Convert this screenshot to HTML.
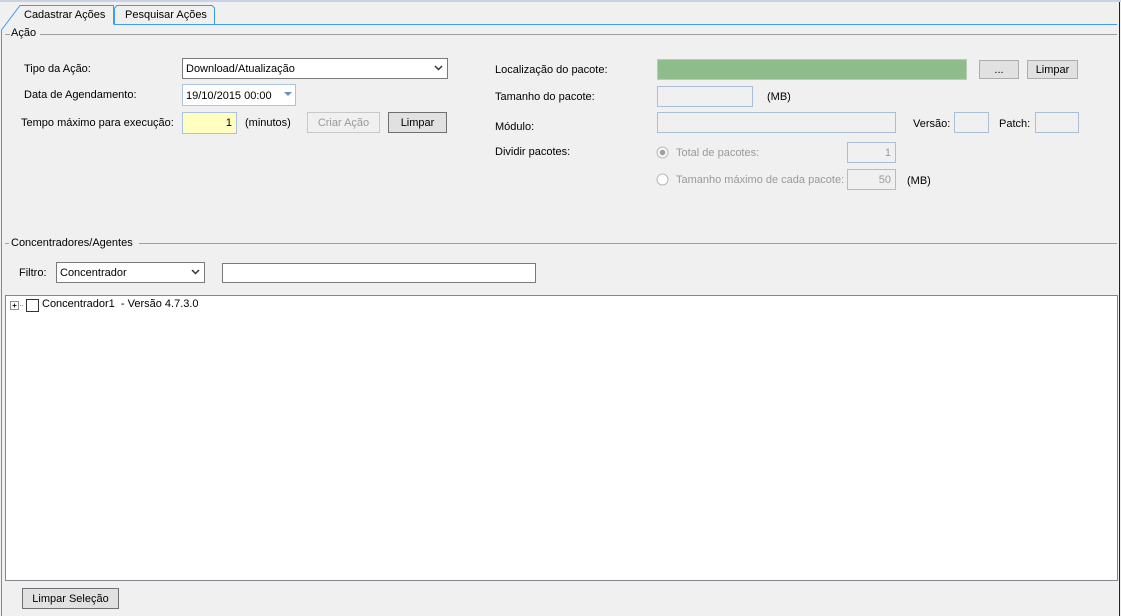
<!DOCTYPE html>
<html><head><meta charset="utf-8"><style>
*{margin:0;padding:0;box-sizing:border-box}
body{width:1121px;height:616px;background:#f0f0f0;position:relative;overflow:hidden;font-family:"Liberation Sans",sans-serif;font-size:11px;color:#000}
.a{position:absolute;white-space:nowrap}
.box{position:absolute;border:1px solid #a9bfd6;background:#f0f0f0}
.btn{position:absolute;border:1px solid #adadad;background:#e1e1e1;text-align:center;line-height:20px}
.gray{color:#9a9a9a}
.line{position:absolute;height:1px;background:#a0a0a0}
</style></head><body>
<div class="a" style="left:0;top:0;width:1121px;height:2px;background:#c8d2e2"></div>
<svg class="a" style="left:0;top:0" width="1121" height="616">
<path d="M1.5 616 V30 L20 5.5 H113.5 V24.5" fill="none" stroke="#3c9cf0" stroke-width="1"/>
<path d="M114.5 24.5 V8 L117 5.5 H212 L214.5 8 V24.5" fill="none" stroke="#3c9cf0"/>
<path d="M114 24.5 H1117" stroke="#3c9cf0"/>
<path d="M1119.5 2 V616" stroke="#222" stroke-width="1"/>
</svg>
<div class="a" style="left:24px;top:9px">Cadastrar Ações</div>
<div class="a" style="left:125px;top:9px">Pesquisar Ações</div>
<div class="line" style="left:5px;top:34px;width:5px"></div>
<div class="a" style="left:11px;top:27px">Ação</div>
<div class="line" style="left:40px;top:34px;width:1077px"></div>

<div class="a" style="left:24px;top:63px">Tipo da Ação:</div>
<div class="a" style="left:182px;top:58px;width:266px;height:21px;border:1px solid #7a7a7a;background:#fff;padding:4px 0 0 3px">Download/Atualização</div>
<svg class="a" style="left:434px;top:64px" width="10" height="8"><path d="M1 2 L4.5 5.5 L8 2" fill="none" stroke="#333" stroke-width="1.5"/></svg>
<div class="a" style="left:24px;top:89px">Data de Agendamento:</div>
<div class="a" style="left:182px;top:84px;width:114px;height:22px;border:1px solid #a8c2e0;background:#fff;padding:5px 0 0 3px">19/10/2015 00:00</div>
<svg class="a" style="left:284px;top:92px" width="9" height="5"><path d="M0 0 H8 L4 4Z" fill="#6d8cb8"/></svg>
<div class="a" style="left:21px;top:117px">Tempo máximo para execução:</div>
<div class="a" style="left:182px;top:112px;width:55px;height:22px;border:1px solid #a8c2e0;background:#ffffc0;text-align:right;padding:4px 4px 0 0">1</div>
<div class="a" style="left:245px;top:117px">(minutos)</div>
<div class="btn gray" style="left:307px;top:112px;width:73px;height:21px;background:#f0f0f0;border-color:#c8c8c8">Criar Ação</div>
<div class="btn" style="left:388px;top:112px;width:59px;height:21px;background:#e1e1e1;border-color:#707070">Limpar</div>

<div class="a" style="left:495px;top:64px">Localização do pacote:</div>
<div class="a" style="left:657px;top:59px;width:310px;height:21px;background:#8fbc8b;border:1px solid #b8cbb8"></div>
<div class="btn" style="left:979px;top:60px;width:40px;height:19px;line-height:18px">...</div>
<div class="btn" style="left:1027px;top:60px;width:51px;height:19px;line-height:18px">Limpar</div>
<div class="a" style="left:495px;top:91px">Tamanho do pacote:</div>
<div class="box" style="left:657px;top:86px;width:96px;height:21px"></div>
<div class="a" style="left:767px;top:91px">(MB)</div>
<div class="a" style="left:495px;top:121px">Módulo:</div>
<div class="box" style="left:657px;top:112px;width:239px;height:21px"></div>
<div class="a" style="left:913px;top:118px">Versão:</div>
<div class="box" style="left:954px;top:112px;width:35px;height:21px"></div>
<div class="a" style="left:999px;top:118px">Patch:</div>
<div class="box" style="left:1035px;top:112px;width:44px;height:21px"></div>
<div class="a" style="left:495px;top:146px">Dividir pacotes:</div>
<svg class="a" style="left:656px;top:146px" width="13" height="13"><circle cx="6.5" cy="6.5" r="5.5" fill="#f8f8f8" stroke="#b8b8b8"/><circle cx="6.5" cy="6.5" r="2.8" fill="#a0a0a0"/></svg>
<div class="a gray" style="left:676px;top:147px">Total de pacotes:</div>
<div class="box gray" style="left:847px;top:142px;width:49px;height:21px;text-align:right;padding:4px 4px 0 0">1</div>
<svg class="a" style="left:656px;top:173px" width="13" height="13"><circle cx="6.5" cy="6.5" r="5.5" fill="#fff" stroke="#b8b8b8"/></svg>
<div class="a gray" style="left:676px;top:174px">Tamanho máximo de cada pacote:</div>
<div class="box gray" style="left:847px;top:169px;width:49px;height:21px;text-align:right;padding:4px 4px 0 0">50</div>
<div class="a" style="left:907px;top:175px">(MB)</div>

<div class="line" style="left:5px;top:243px;width:4px"></div>
<div class="a" style="left:11px;top:237px">Concentradores/Agentes</div>
<div class="line" style="left:139px;top:243px;width:978px"></div>
<div class="a" style="left:19px;top:267px">Filtro:</div>
<div class="a" style="left:56px;top:262px;width:149px;height:21px;border:1px solid #7a7a7a;background:#fff;padding:4px 0 0 3px">Concentrador</div>
<svg class="a" style="left:191px;top:268px" width="10" height="8"><path d="M1 2 L4.5 5.5 L8 2" fill="none" stroke="#333" stroke-width="1.5"/></svg>
<div class="a" style="left:222px;top:263px;width:314px;height:20px;border:1px solid #7a7a7a;background:#fff"></div>

<div class="a" style="left:5px;top:295px;width:1113px;height:286px;border:1px solid #828790;background:#fff"></div>
<svg class="a" style="left:9px;top:298px" width="32" height="16">
<rect x="1.5" y="3.5" width="8" height="8" fill="#fff" stroke="#919191"/><path d="M3.5 7.5 H7.5 M5.5 5.5 V9.5" stroke="#222"/>
<path d="M11 7.5 H15" stroke="#a0a0a0" stroke-dasharray="1 1"/>
<rect x="17.5" y="1.5" width="12" height="12" fill="#fff" stroke="#333"/>
</svg>
<div class="a" style="left:42px;top:298px">Concentrador1&nbsp; - Versão 4.7.3.0</div>
<div class="btn" style="left:22px;top:588px;width:97px;height:21px;border-color:#707070">Limpar Seleção</div>
</body></html>
